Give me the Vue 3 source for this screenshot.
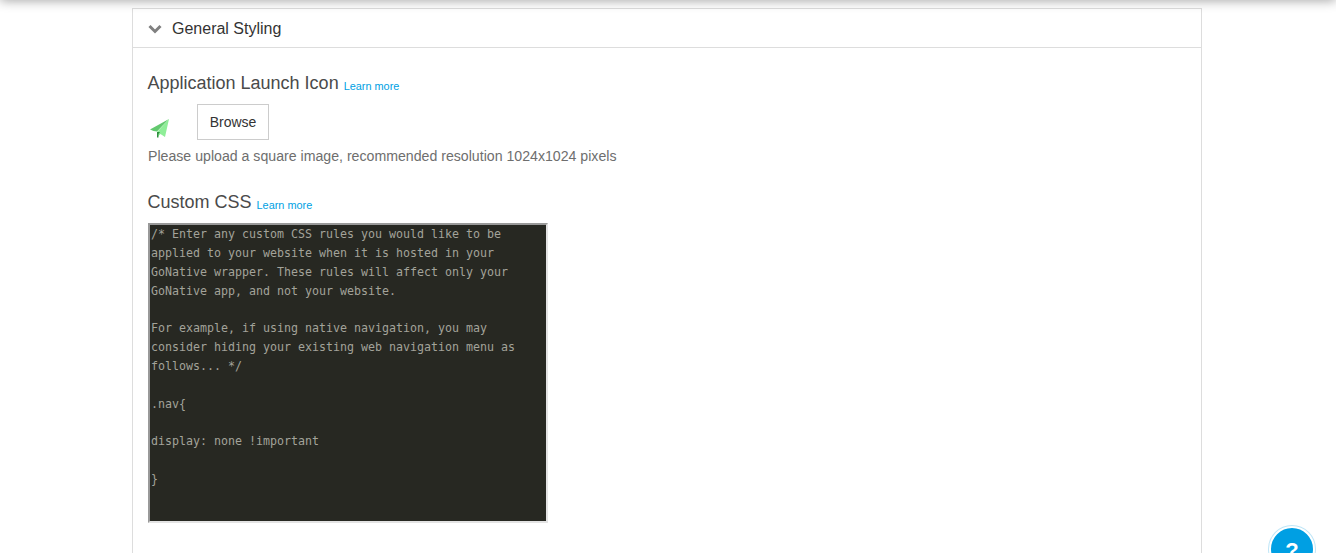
<script setup>
const css = `/* Enter any custom CSS rules you would like to be
applied to your website when it is hosted in your
GoNative wrapper. These rules will affect only your
GoNative app, and not your website.

For example, if using native navigation, you may
consider hiding your existing web navigation menu as
follows... */

.nav{

display: none !important

}`
</script>

<template>
  <div class="page">
    <div class="topshadow"></div>
    <section class="panel">
      <header class="head">
        <svg class="chev" width="14" height="10" viewBox="0 0 14 10"><path d="M1.5 2 7 7.5 12.5 2" fill="none" stroke="#808080" stroke-width="3"/></svg>
        <span class="title">General Styling</span>
      </header>
      <div class="body">
        <h3 class="h first">Application Launch Icon <a class="more">Learn more</a></h3>
        <div class="iconrow">
          <svg class="plane" width="20" height="20" viewBox="0 0 20 20">
            <path d="M0 10.500 19 0 7 12.500 3.500 12Z" fill="#63c96f"/>
            <path d="M19 0 15 18 10.500 15 7 18V13Z" fill="#8fee98"/>
            <path d="M7 13H10L8.500 15V18.500H7Z" fill="#2f8f3f"/>
          </svg>
          <button class="browse">Browse</button>
        </div>
        <p class="hint">Please upload a square image, recommended resolution 1024x1024 pixels</p>
        <h3 class="h second">Custom CSS <a class="more">Learn more</a></h3>
        <textarea class="code" readonly spellcheck="false" :value="css"></textarea>
      </div>
    </section>
    <div class="help"><span>?</span></div>
  </div>
</template>

<style>
html, body { margin: 0; height: 100%; overflow: hidden; background: #fff; }
</style>

<style scoped>
.page {
  position: relative;
  height: 553px;
  overflow: hidden;
  box-sizing: border-box;
  padding: 8px 134px 0 132px;
  background: #fff;
  font-family: "Liberation Sans", Arial, sans-serif;
}
.topshadow {
  position: absolute;
  left: 0; right: 0; top: -10px;
  height: 10px;
  box-shadow: 0 0 12px rgba(0,0,0,.42);
}
.panel {
  box-sizing: border-box;
  width: 1070px;
  height: 600px;
  border: 1px solid #ddd;
}
.head {
  display: flex;
  align-items: center;
  height: 38px;
  padding-left: 15px;
  border-bottom: 1px solid #ddd;
}
.chev { margin-right: 10px; margin-top: 2px; }
.title { font-size: 16px; color: #333; padding-top: 2px; }
.body { padding: 0 15px 0 14.5px; }
.h {
  margin: 0;
  font-weight: 400;
  font-size: 18px;
  line-height: 20px;
  color: #4a4a4a;
}
.first { padding-top: 25px; }
.second { margin-top: 28px; }
.more { font-size: 10.9px; color: #009fe3; position: relative; top: 1px; margin-left: 0; }
.iconrow {
  display: flex;
  align-items: center;
  margin-top: 9px;
  height: 36px;
}
.plane { margin: 14px 27px 0 2.5px; }
.browse {
  box-sizing: border-box;
  width: 72px;
  height: 36px;
  padding: 0;
  background: #fff;
  border: 1px solid #ccc;
  font: 14px "Liberation Sans", Arial, sans-serif;
  color: #333;
}
.hint {
  margin: 8px 0 0;
  padding-left: .5px;
  font-size: 14.15px;
  line-height: 16px;
  color: #6e6e6e;
}
.code {
  display: block;
  box-sizing: border-box;
  width: 400px;
  height: 300px;
  margin: 9px 0 0 .5px;
  padding: 0 1px;
  border-width: 2px;
  border-color: #999 #e3e3e3 #e3e3e3 #999;
  border-style: solid;
  border-radius: 0;
  outline: none;
  resize: none;
  overflow: hidden;
  background: #272822;
  color: #a3a39a;
  font: 11.63px/18.85px "DejaVu Sans Mono", monospace;
}
.help {
  position: absolute;
  left: 1269px;
  top: 526px;
  width: 46px;
  height: 46px;
  box-sizing: border-box;
  border-radius: 50%;
  background: #009fe3;
  border: 2px solid #fff;
  box-shadow: 0 0 0 1px #bfe6f7;
  display: flex;
  justify-content: center;
  color: #fff;
  font-weight: 700;
  font-size: 22px;
  line-height: 30px;
  padding-top: 8px;
}
</style>
